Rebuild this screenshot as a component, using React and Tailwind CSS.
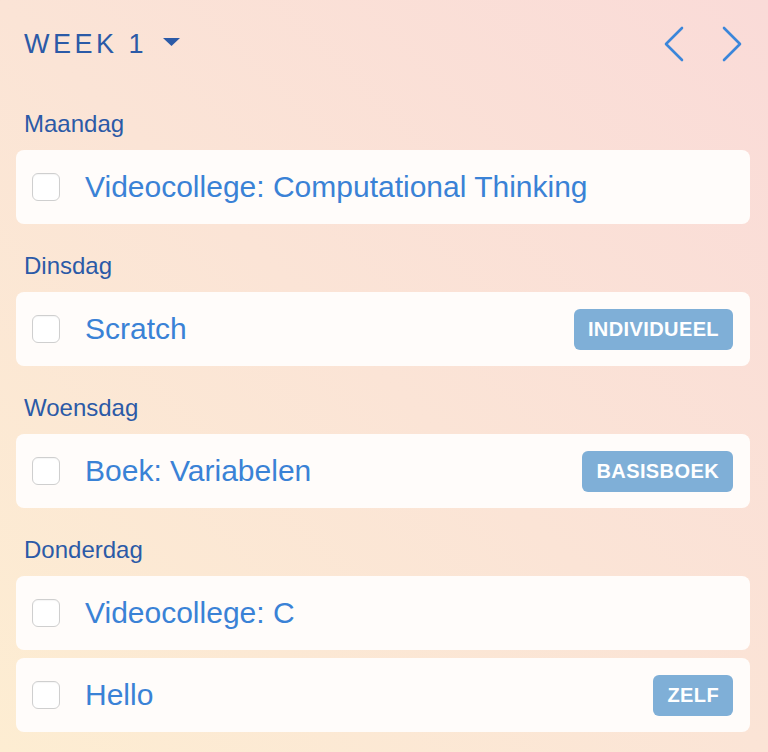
import { useState } from 'react'

const days = [
  {
    name: 'Maandag',
    items: [{ title: 'Videocollege: Computational Thinking' }],
  },
  {
    name: 'Dinsdag',
    items: [{ title: 'Scratch', tag: 'INDIVIDUEEL' }],
  },
  {
    name: 'Woensdag',
    items: [{ title: 'Boek: Variabelen', tag: 'BASISBOEK' }],
  },
  {
    name: 'Donderdag',
    items: [{ title: 'Videocollege: C' }, { title: 'Hello', tag: 'ZELF' }],
  },
]

const Chevron = ({ dir }) => (
  <svg width="22" height="36" viewBox="0 0 22 36" fill="none">
    <path
      d={dir === 'left' ? 'M19 2 L3 18 L19 34' : 'M3 2 L19 18 L3 34'}
      stroke="#3b86da"
      strokeWidth="2.6"
      strokeLinecap="round"
      strokeLinejoin="round"
    />
  </svg>
)

const TaskCard = ({ title, tag }) => {
  const [done, setDone] = useState(false)

  return (
    <div className="flex h-[74px] items-center rounded-lg bg-[#fffcfa] pl-4 pr-[17px]">
      <button
        onClick={() => setDone(!done)}
        className={`h-7 w-7 shrink-0 rounded-md border border-[#cfcfcf] shadow-[inset_0_1px_1px_rgba(0,0,0,0.04)] ${
          done ? 'bg-[#3b86da]' : 'bg-white'
        }`}
      />
      <span className="ml-[25px] flex-1 text-[30px] leading-none text-[#3a82d6]">{title}</span>
      {tag && (
        <span className="flex h-[41px] items-center rounded-md bg-[#7fafd7] px-[14px] text-[20px] font-semibold tracking-[0.02em] text-white">
          {tag}
        </span>
      )}
    </div>
  )
}

const App = () => {
  return (
    <div
      className="min-h-[752px] bg-gradient-to-tr from-[#fdedd2] via-[#fbe4d6] to-[#fadbd8] pb-5 pl-4 pr-[18px]"
      style={{ fontFamily: '"Liberation Sans", Arial, sans-serif' }}
    >
      {/* Week header */}
      <div className="flex h-14 translate-y-4 items-center justify-between pl-2">
        <button className="flex items-center text-[#2b5aa7]">
          <span className="text-[27px] tracking-[0.13em]">WEEK 1</span>
          <svg width="17" height="8" viewBox="0 0 17 8" className="ml-[16px] -mt-1">
            <path d="M0 0 L17 0 L8.5 8 Z" fill="#2b5aa7" />
          </svg>
        </button>
        <div className="flex items-center gap-9 pr-[7px]">
          <Chevron dir="left" />
          <Chevron dir="right" />
        </div>
      </div>

      <div className="pt-4">
        {days.map((day, i) => (
          <div key={day.name}>
            <div
              className={`${i === 0 ? 'mt-9' : 'mt-[26px]'} mb-[10px] pl-2 text-[24px] leading-8 text-[#2b5aa7]`}
            >
              {day.name}
            </div>
            <div className="flex flex-col gap-2">
              {day.items.map((item) => (
                <TaskCard key={item.title} {...item} />
              ))}
            </div>
          </div>
        ))}
      </div>
    </div>
  )
}

export default App
